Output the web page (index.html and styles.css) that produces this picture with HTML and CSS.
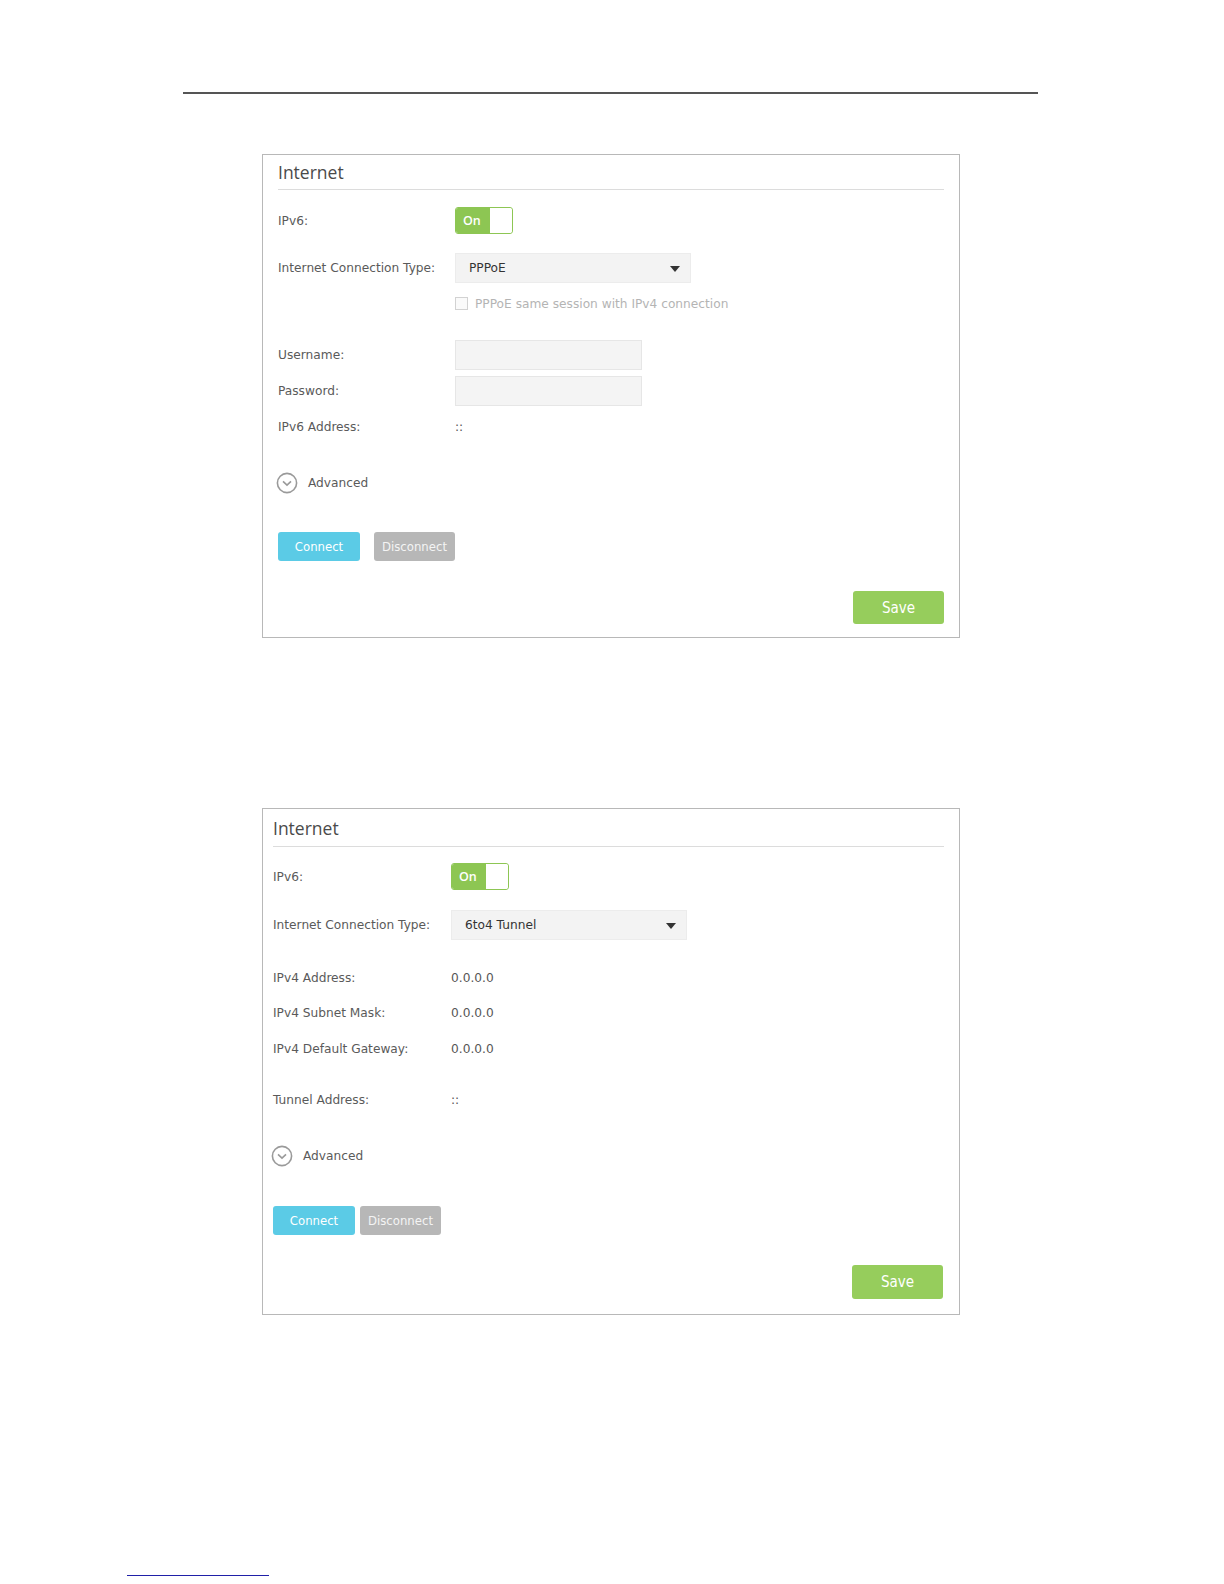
FILE: index.html
```html
<!DOCTYPE html>
<html lang="en">
<head>
  <meta charset="UTF-8" />
  <meta name="viewport" content="width=device-width, initial-scale=1.0"/>
  <title>Internet - IPv6</title>
  <link rel="stylesheet" href="styles.css">
</head>
<body>

  <!-- Page header rule -->
  <div class="page-rule"></div>

  <!-- PPPoE panel -->
  <section class="panel panel-pppoe">
    <h2 class="panel-title">Internet</h2>

    <div class="row r-toggle">
      <span class="label">IPv6:</span>
      <div class="toggle"><span class="toggle-on">On</span><span class="toggle-knob"></span></div>
    </div>

    <div class="row r-select">
      <span class="label">Internet Connection Type:</span>
      <div class="select"><span>PPPoE</span><span class="caret"></span></div>
    </div>

    <div class="row r-check">
      <span class="label"></span>
      <label class="check"><span class="box"></span>PPPoE same session with IPv4 connection</label>
    </div>

    <div class="row r-user">
      <span class="label">Username:</span>
      <input class="text-input" type="text">
    </div>

    <div class="row r-pass">
      <span class="label">Password:</span>
      <input class="text-input" type="password">
    </div>

    <div class="row r-addr">
      <span class="label">IPv6 Address:</span>
      <span class="value">::</span>
    </div>

    <div class="row advanced r-adv">
      <svg class="adv-icon" width="22" height="22" viewBox="0 0 22 22">
        <circle cx="11" cy="11" r="9.6" fill="none" stroke="#9a9a9a" stroke-width="1.6"/>
        <path d="M7 9.4 L11 13.2 L15 9.4" fill="none" stroke="#9a9a9a" stroke-width="1.6"/>
      </svg>
      <span>Advanced</span>
    </div>

    <div class="row actions r-btns">
      <button class="btn btn-connect">Connect</button>
      <button class="btn btn-disconnect">Disconnect</button>
    </div>

    <div class="save-row r-save">
      <button class="btn btn-save">Save</button>
    </div>
  </section>

  <!-- 6to4 Tunnel panel -->
  <section class="panel panel-tunnel">
    <h2 class="panel-title">Internet</h2>

    <div class="row t-toggle">
      <span class="label">IPv6:</span>
      <div class="toggle"><span class="toggle-on">On</span><span class="toggle-knob"></span></div>
    </div>

    <div class="row t-select">
      <span class="label">Internet Connection Type:</span>
      <div class="select"><span>6to4 Tunnel</span><span class="caret"></span></div>
    </div>

    <div class="row t-ip">
      <span class="label">IPv4 Address:</span>
      <span class="value">0.0.0.0</span>
    </div>

    <div class="row t-mask">
      <span class="label">IPv4 Subnet Mask:</span>
      <span class="value">0.0.0.0</span>
    </div>

    <div class="row t-gw">
      <span class="label">IPv4 Default Gateway:</span>
      <span class="value">0.0.0.0</span>
    </div>

    <div class="row t-tunnel">
      <span class="label">Tunnel Address:</span>
      <span class="value">::</span>
    </div>

    <div class="row advanced t-adv">
      <svg class="adv-icon" width="22" height="22" viewBox="0 0 22 22">
        <circle cx="11" cy="11" r="9.6" fill="none" stroke="#9a9a9a" stroke-width="1.6"/>
        <path d="M7 9.4 L11 13.2 L15 9.4" fill="none" stroke="#9a9a9a" stroke-width="1.6"/>
      </svg>
      <span>Advanced</span>
    </div>

    <div class="row actions tight t-btns">
      <button class="btn btn-connect">Connect</button>
      <button class="btn btn-disconnect">Disconnect</button>
    </div>

    <div class="save-row t-save">
      <button class="btn btn-save">Save</button>
    </div>
  </section>

  <!-- footnote rule -->
  <div class="foot-rule"></div>

</body>
</html>
```

FILE: styles.css
```css
body {
  margin: 0;
  background: #fff;
  font-family: "DejaVu Sans", Verdana, sans-serif;
  font-size: 12.2px;
  color: #5a5a5a;
}

.page-rule {
  margin: 92px 0 0 183px;
  width: 855px;
  border-top: 2px solid #555;
}

.panel {
  box-sizing: border-box;
  width: 698px;
  margin-left: 262px;
  border: 1px solid #b8b8b8;
  background: #fff;
}

.panel-pppoe {
  margin-top: 60px;
  padding: 5px 15px 13px 15px;
}

.panel-tunnel {
  margin-top: 170px;
  padding: 7px 15px 15px 10px;
}

.panel-title {
  margin: 0;
  font-family: "Open Sans", "Liberation Sans", sans-serif;
  font-weight: 400;
  font-size: 17.5px;
  line-height: 24px;
  color: #4a4a4a;
  padding-bottom: 5px;
  border-bottom: 1px solid #dcdcdc;
}

.panel-tunnel .panel-title {
  padding-bottom: 6px;
}

/* rows */
.row {
  display: flex;
  align-items: center;
  height: 20px;
}

.label {
  width: 177px;
  flex-shrink: 0;
  white-space: nowrap;
}

.panel-tunnel .label {
  width: 178px;
}

.value {
  color: #555;
}

.r-toggle { margin-top: 17px; height: 27px; }
.r-select { margin-top: 19px; height: 30px; }
.r-check  { margin-top: 14px; height: 13px; }
.r-user   { margin-top: 30px; height: 30px; }
.r-pass   { margin-top: 6px;  height: 30px; }
.r-addr   { margin-top: 11px; }
.r-adv    { margin-top: 36px; }
.r-btns   { margin-top: 39px; height: 29px; }
.r-save   { margin-top: 30px; }

.t-toggle { margin-top: 16px; height: 27px; }
.t-select { margin-top: 20px; height: 30px; }
.t-ip     { margin-top: 28px; }
.t-mask   { margin-top: 15px; }
.t-gw     { margin-top: 16px; }
.t-tunnel { margin-top: 31px; }
.t-adv    { margin-top: 36px; }
.t-btns   { margin-top: 40px; height: 29px; }
.t-save   { margin-top: 30px; }

/* toggle */
.toggle {
  display: flex;
  width: 58px;
  height: 27px;
  box-sizing: border-box;
  border: 1px solid #8dc653;
  border-radius: 3px;
  overflow: hidden;
}

.toggle-on {
  width: 34px;
  background: #8dc653;
  color: #fff;
  font-family: "Open Sans", sans-serif;
  font-weight: 600;
  font-size: 12.5px;
  line-height: 25px;
  padding-left: 7px;
  box-sizing: border-box;
}

.toggle-knob {
  flex: 1;
  background: #fff;
  border-radius: 0 2px 2px 0;
}

/* select */
.select {
  box-sizing: border-box;
  width: 236px;
  height: 30px;
  background: #f3f3f3;
  border: 1px solid #ececec;
  display: flex;
  align-items: center;
  justify-content: space-between;
  padding: 0 10px 0 13px;
  color: #333;
}

.caret {
  width: 0;
  height: 0;
  border-left: 5px solid transparent;
  border-right: 5px solid transparent;
  border-top: 6px solid #333;
  margin-top: 2px;
}

/* checkbox */
.check {
  display: flex;
  align-items: center;
  color: #b4b4b4;
  white-space: nowrap;
}

.check .box {
  width: 11px;
  height: 11px;
  border: 1px solid #d2d2d2;
  background: #fafafa;
  margin-right: 7px;
}

/* inputs */
.text-input {
  box-sizing: border-box;
  width: 187px;
  height: 30px;
  margin: 0;
  background: #f4f4f4;
  border: 1px solid #e6e6e6;
  border-radius: 0;
  outline: none;
}

/* advanced */
.advanced {
  gap: 10px;
  margin-left: -2px;
}

.adv-icon {
  display: block;
}

/* buttons */
.btn {
  border: none;
  border-radius: 3px;
  color: #fff;
  font-family: "DejaVu Sans Condensed", "Liberation Sans Narrow", sans-serif;
  font-size: 13px;
  padding: 0;
  cursor: pointer;
}

.actions {
  gap: 14px;
}

.actions.tight {
  gap: 5px;
}

.btn-connect {
  width: 82px;
  height: 29px;
  background: #5bcbe6;
}

.btn-disconnect {
  width: 81px;
  height: 29px;
  background: #b7b7b7;
  color: #f4f4f4;
}

.save-row {
  display: flex;
  justify-content: flex-end;
}

.btn-save {
  width: 91px;
  height: 33px;
  background: #96cd5c;
  font-size: 15px;
}

.panel-tunnel .btn-save {
  height: 34px;
  margin-right: 1px;
}

.foot-rule {
  margin: 260px 0 0 127px;
  width: 142px;
  border-top: 1px solid #2020a8;
}
```
